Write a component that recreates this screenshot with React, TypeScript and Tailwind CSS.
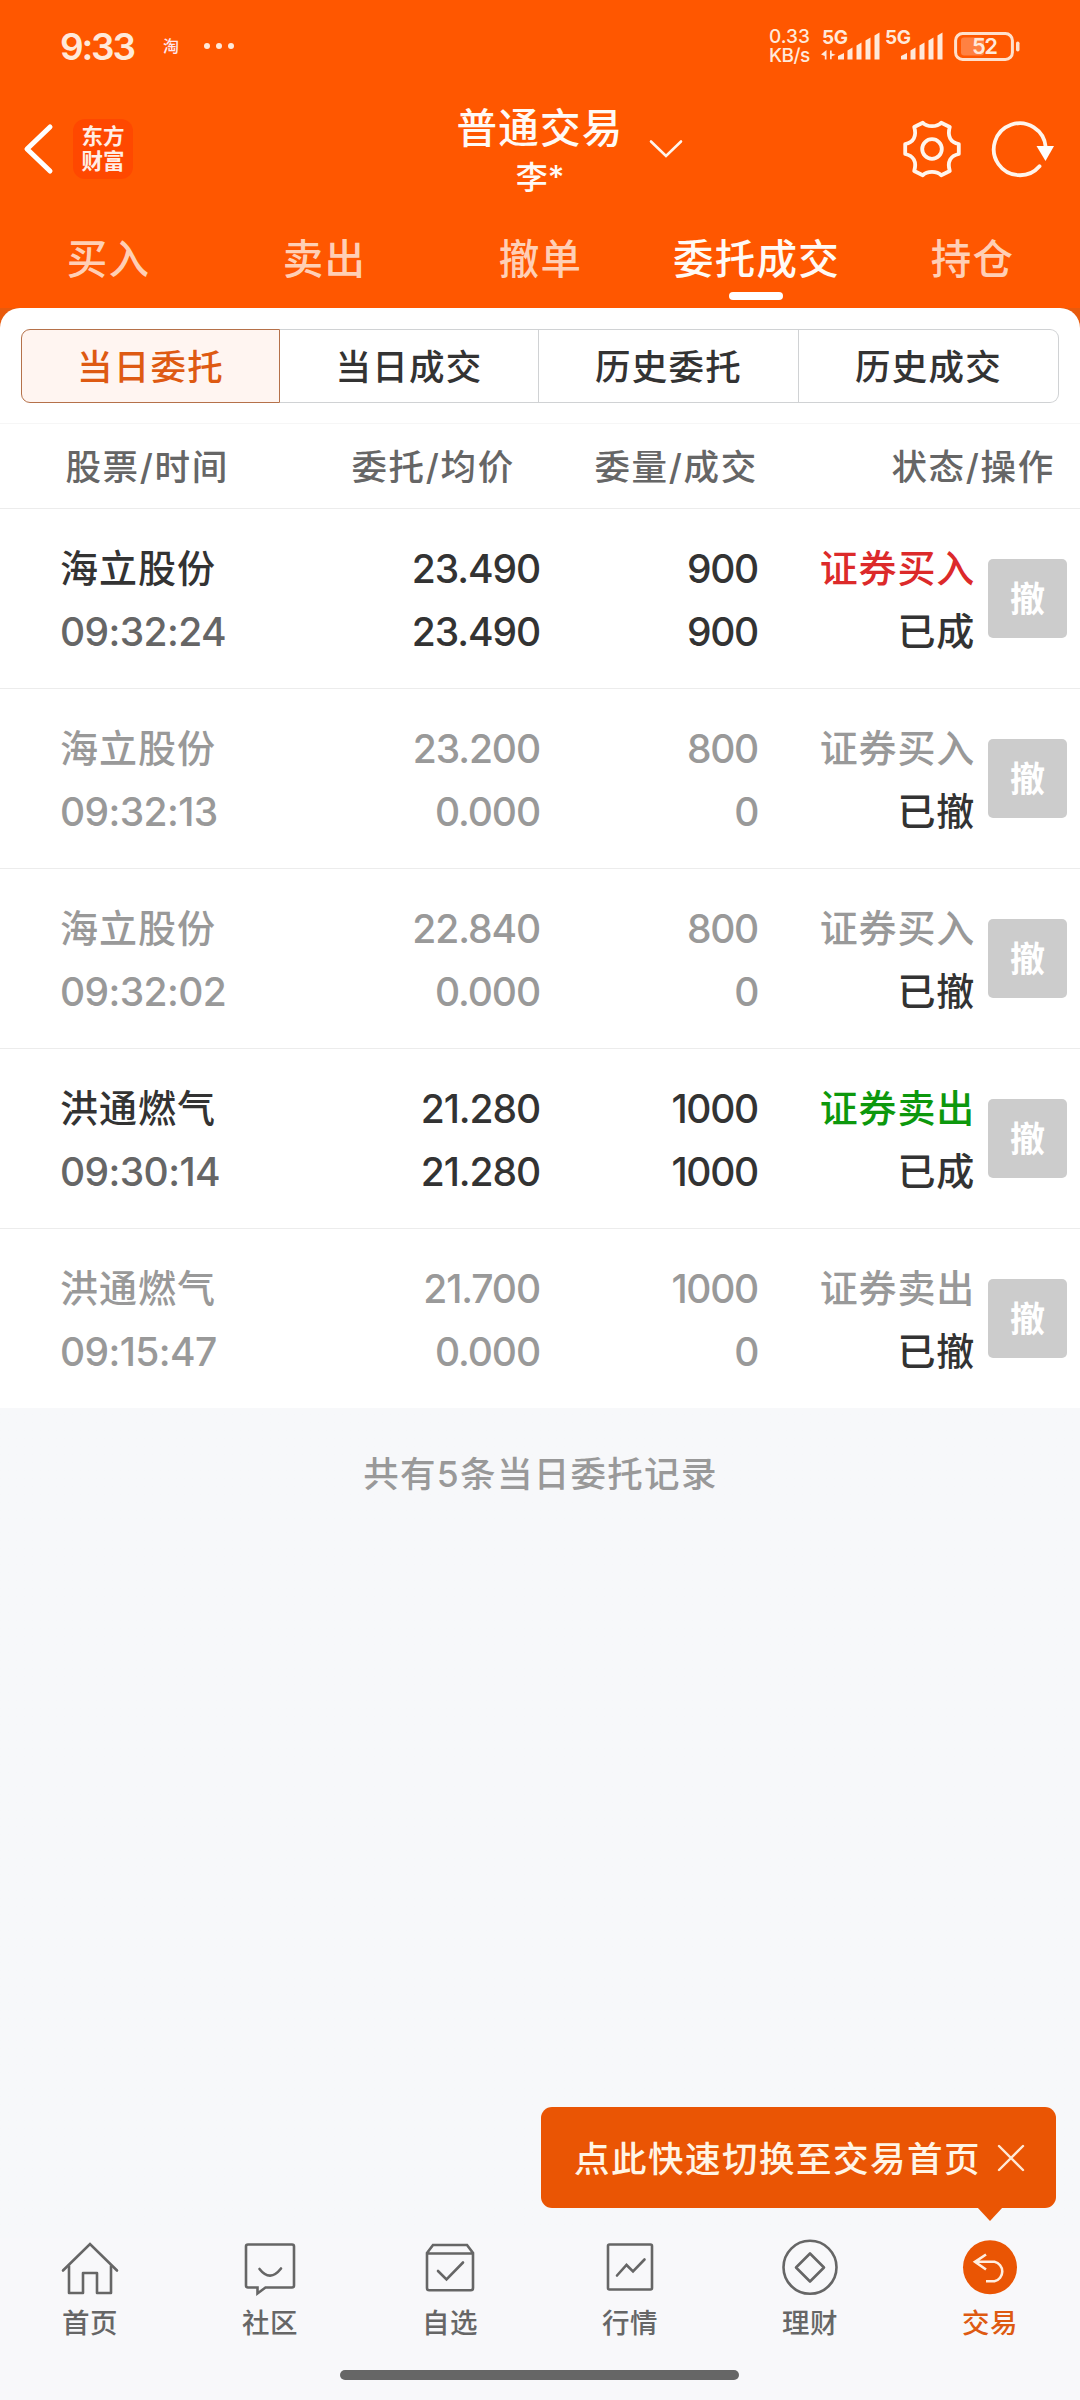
import { clsx } from 'clsx'
import type { ReactNode } from 'react'

const mainTabs = ['买入', '卖出', '撤单', '委托成交', '持仓']
const subTabs = ['当日委托', '当日成交', '历史委托', '历史成交']

type Order = {
  name: string
  time: string
  price: string
  avg: string
  qty: string
  filled: string
  side: 'buy' | 'sell'
  done: boolean
}

const orders: Order[] = [
  { name: '海立股份', time: '09:32:24', price: '23.490', avg: '23.490', qty: '900', filled: '900', side: 'buy', done: true },
  { name: '海立股份', time: '09:32:13', price: '23.200', avg: '0.000', qty: '800', filled: '0', side: 'buy', done: false },
  { name: '海立股份', time: '09:32:02', price: '22.840', avg: '0.000', qty: '800', filled: '0', side: 'buy', done: false },
  { name: '洪通燃气', time: '09:30:14', price: '21.280', avg: '21.280', qty: '1000', filled: '1000', side: 'sell', done: true },
  { name: '洪通燃气', time: '09:15:47', price: '21.700', avg: '0.000', qty: '1000', filled: '0', side: 'sell', done: false },
]

function SignalBars({ x }: { x: number }) {
  return (
    <g fill="#ffe9da">
      <path d={`M${x} 29.5v-3.5l6-3v6.5z`} />
      <path d={`M${x + 9.5} 29.5v-9l5-3v12z`} />
      <path d={`M${x + 18.5} 29.5v-14l5-3v17z`} />
      <path d={`M${x + 27.5} 29.5v-19l5-3v22z`} />
      <path d={`M${x + 36.5} 29.5v-24l5-3v27z`} />
    </g>
  )
}

function StatusBar() {
  return (
    <div className="flex h-[92px] items-center pl-[60px] text-[#ffe9da]">
      <span className="w-[101px] text-[37px] leading-none font-semibold tracking-[-2.200px]">9:33</span>
      <span className="w-[43px] pl-[2px] text-[16px] leading-none font-medium text-[#ffe6f0]">淘</span>
      <span className="flex gap-[6px]">
        <i className="size-[6px] rounded-full bg-[#ffe9da]" />
        <i className="size-[6px] rounded-full bg-[#ffe9da]" />
        <i className="size-[6px] rounded-full bg-[#ffe9da]" />
      </span>
      <div className="ml-auto w-[52px] text-[19px] leading-[19px] font-medium">
        <div>0.33</div>
        <div className="tracking-[-0.500px]">KB/s</div>
      </div>
      <div className="relative h-[32px] w-[133px]">
        <svg className="block" width="133" height="32" viewBox="0 0 133 32">
          <SignalBars x={17} />
          <SignalBars x={80} />
          <path d="M5.5 20v9.500h-1.700v-3.500l-3.800-1.500z M9 20.500h1.700v3l4 1.300-4 1.500v3h-1.700z" fill="#ffe9da" />
        </svg>
        <span className="absolute top-0 left-px text-[19px] leading-[15px] font-bold tracking-[-0.500px]">5G</span>
        <span className="absolute top-0 left-[64px] text-[19px] leading-[15px] font-bold tracking-[-0.500px]">5G</span>
      </div>
      <div className="relative mr-[60px] flex h-[29px] w-[66px]">
        <svg className="block" width="66" height="29" viewBox="0 0 66 29">
          <rect x="1.600" y="1.600" width="56.800" height="25.800" rx="7" fill="none" stroke="#ffe0cc" strokeWidth="3" />
          <rect x="7" y="5.500" width="23" height="18" rx="3" fill="#ff8142" />
          <rect x="62" y="9.500" width="3.500" height="10" rx="1.700" fill="#ffe0cc" />
        </svg>
        <span className="absolute top-0 left-[18px] text-[22px] leading-[29px] font-semibold tracking-[-1.500px]">52</span>
      </div>
    </div>
  )
}

function TitleBar() {
  return (
    <div className="flex h-[114px] items-center">
      <div className="flex w-[360px] items-center pl-[22px]">
        <svg width="32" height="54" viewBox="0 0 32 54" fill="none" stroke="#fff" strokeWidth="5">
          <path d="M28 5 5 27l23 22" strokeLinecap="round" strokeLinejoin="round" />
        </svg>
        <div className="ml-[19px] flex h-[60px] w-[60px] flex-col items-center justify-center rounded-[12px] bg-[#ff4800] text-[21.500px] leading-[25px] font-bold text-[#ffeee6]">
          <div>东方</div>
          <div>财富</div>
        </div>
      </div>
      <div className="flex w-[360px] items-center justify-center pt-[7px] text-[#fffaf5]">
        <div className="text-center font-medium">
          <div className="h-[50px] text-[40.500px] leading-[51px] tracking-[1.300px]">普通交易</div>
          <div className="h-[50px] text-[32px] leading-[50px]">李*</div>
        </div>
      </div>
      <svg className="-ml-[72px]" width="36" height="20" viewBox="0 0 36 20" fill="none" stroke="#fff5ec" strokeWidth="2.600">
        <path d="M3 2.500 18 17 33 2.500" strokeLinecap="round" />
      </svg>
      <svg className="ml-auto" width="60" height="60" viewBox="-30 -30 60 60" fill="none" stroke="#fff5ec" strokeWidth="3.800">
        <circle r="9.800" />
        <path
          d="M-9.200 -26.300 C-5 -21.700 5 -21.700 9.200 -26.300 L17.800 -22 C15 -13 18.500 -6.500 26.800 -5 V5 C18.500 6.500 15 13 17.800 22 L9.200 26.300 C5 21.700 -5 21.700 -9.200 26.300 L-17.800 22 C-15 13 -18.500 6.500 -26.800 5 V-5 C-18.500 -6.500 -15 -13 -17.800 -22 Z"
          strokeLinejoin="round"
        />
      </svg>
      <svg className="mr-[24px] ml-[28px]" width="66" height="60" viewBox="-30 -30 66 60">
        <path d="M25.700 -2 A26 26 0 1 0 19.500 17.200" fill="none" stroke="#fff5ec" strokeWidth="3.800" strokeLinecap="round" />
        <path d="M16.500 -3h17.500l-8.500 15z" fill="#fff" />
      </svg>
    </div>
  )
}

function MainTabs() {
  return (
    <div className="grid h-[102px] grid-cols-5">
      {mainTabs.map((tab) => {
        const active = tab === '委托成交'
        return (
          <div key={tab} className="flex flex-col items-center pt-[24px]">
            <span
              className={clsx(
                'pl-px text-[40.500px] leading-[60px] font-medium tracking-[1.200px] whitespace-nowrap',
                active ? 'text-[#fffaf5]' : 'text-[#ffcfb5]'
              )}
            >
              {tab}
            </span>
            {active && <span className="mt-[2px] h-[8px] w-[54px] rounded-full bg-white" />}
          </div>
        )
      })}
    </div>
  )
}

function SubTabs() {
  return (
    <div className="mx-[21px] mt-[21px] grid h-[74px] grid-cols-[259px_259px_260px_260px] text-[35.500px] text-[#333]">
      {subTabs.map((tab, i) => (
        <div
          key={tab}
          className={clsx(
            'flex items-center justify-center border pt-[3px] tracking-[1.200px]',
            i === 0 && 'rounded-l-[9px] border-[#b5714a] bg-[#fff5f1] text-[#de5a12]',
            i > 0 && 'border-l-0 border-[#d0d2d4]',
            i === 3 && 'rounded-r-[9px]'
          )}
        >
          {tab}
        </div>
      ))}
    </div>
  )
}

function OrderRow({ order }: { order: Order }) {
  const { done, side } = order
  return (
    <div
      className={clsx(
        'flex h-[180px] items-center border-t border-[#ececec] pl-[60px] text-[39px] leading-[63px]',
        done ? 'text-[#333]' : 'text-[#999]'
      )}
    >
      <div className="w-[240px] pt-[3px]">
        <div className="text-[38px] tracking-[1px]">{order.name}</div>
        <div className={clsx('font-[450] tracking-[-0.600px]', done && 'text-[#666]')}>{order.time}</div>
      </div>
      <div className="w-[240px] pt-[2px] text-right font-[450] tracking-[-1.100px]">
        <div>{order.price}</div>
        <div>{order.avg}</div>
      </div>
      <div className="w-[218px] pt-[2px] text-right font-[450] tracking-[-1.300px]">
        <div>{order.qty}</div>
        <div>{order.filled}</div>
      </div>
      <div className="w-[217px] pt-[3px] text-right text-[38px] tracking-[0.800px]">
        <div className={clsx(done && (side === 'buy' ? 'text-[#dc2a2a]' : 'text-[#0d980d]'))}>
          {side === 'buy' ? '证券买入' : '证券卖出'}
        </div>
        <div className="text-[#333]">{done ? '已成' : '已撤'}</div>
      </div>
      <button className="ml-[13px] h-[79px] w-[79px] rounded-[5px] bg-[#ccc] pt-px text-[35px] leading-[79px] font-bold text-white">
        撤
      </button>
    </div>
  )
}

function HomeIcon() {
  return (
    <>
      <path d="M-27 0.500 0 -26 27 0.500" strokeLinecap="round" />
      <path d="M-21 -4.500V23H-7V3H7V23H21V-4.500" strokeLinejoin="round" />
    </>
  )
}

function CommunityIcon() {
  return (
    <>
      <path d="M-22 -25.500H22Q24 -25.500 24 -23.500V15.500Q24 17.500 22 17.500H-4.500L-12.500 23.500V17.500H-22Q-24 17.500 -24 15.500V-23.500Q-24 -25.500 -22 -25.500Z" />
      <path d="M-10.500 -1Q0 12.500 11 -1.500" strokeLinecap="round" />
    </>
  )
}

function WatchlistIcon() {
  return (
    <>
      <path d="M-23 -17-17 -25H17L23 -17V18Q23 20.300 20.800 20.300H-20.800Q-23 20.300 -23 18ZM-23 -16.500H23" />
      <path d="M-12 1-3.500 9.500 13 -7.500" strokeLinecap="round" />
    </>
  )
}

function MarketIcon() {
  return (
    <>
      <rect x="-22" y="-25.500" width="44" height="45" rx="1.500" />
      <path d="M-13 5.500-3.500 -5 3 1.500 14.500 -10.500" strokeLinecap="round" />
    </>
  )
}

function WealthIcon() {
  return (
    <>
      <circle cy="-2.700" r="26.500" />
      <path d="M0 -16.500 14 -2.500 0 11.500 -14 -2.500Z" strokeLinejoin="round" />
    </>
  )
}

function TradeIcon() {
  return (
    <>
      <circle cy="-2.700" r="27" fill="#ea5504" stroke="none" />
      <path d="M-4 -15.500-15 -8.200-4 -0.500M-15 -8.200H4.500A10 10 0 0 1 4.500 11.300H-4" stroke="#ffeee0" />
    </>
  )
}

const navItems: { label: string; icon: ReactNode }[] = [
  { label: '首页', icon: <HomeIcon /> },
  { label: '社区', icon: <CommunityIcon /> },
  { label: '自选', icon: <WatchlistIcon /> },
  { label: '行情', icon: <MarketIcon /> },
  { label: '理财', icon: <WealthIcon /> },
  { label: '交易', icon: <TradeIcon /> },
]

function BottomNav() {
  return (
    <nav className="relative flex h-[162px] flex-col items-center bg-[#f8f8fa]">
      {/* Quick switch tip */}
      <div className="absolute right-[24px] bottom-[192px] flex h-[101px] w-[515px] items-center rounded-[11px] bg-[#ea5504] pt-[4px] pl-[33px] text-[#fff5e6]">
        <span className="text-[35.500px] leading-none font-medium tracking-[1.500px] whitespace-nowrap">点此快速切换至交易首页</span>
        <svg className="mb-[4px] ml-[15px] shrink-0" width="30" height="30" viewBox="0 0 30 30" stroke="#ffe9d6" strokeWidth="2.400">
          <path d="M3 3 27 27M27 3 3 27" strokeLinecap="round" />
        </svg>
        <svg className="absolute top-[100px] right-[53px]" width="26" height="14" viewBox="0 0 26 14">
          <path d="M0 0H26L13 14Z" fill="#ea5504" />
        </svg>
      </div>

      <div className="grid w-full grid-cols-6">
        {navItems.map(({ label, icon }) => (
          <div key={label} className="flex flex-col items-center">
            <svg width="60" height="64" viewBox="-30 -32 60 64" fill="none" stroke="#666" strokeWidth="2.600">
              {icon}
            </svg>
            <span
              className={clsx(
                'mt-[3px] text-[27.500px] leading-[36px] font-medium tracking-[0.600px]',
                label === '交易' ? 'text-[#de5a12]' : 'text-[#666]'
              )}
            >
              {label}
            </span>
          </div>
        ))}
      </div>
      <div className="mt-[29px] mr-px h-[10px] w-[399px] rounded-full bg-[#666]" />
    </nav>
  )
}

export default function App() {
  return (
    <div className="flex h-[2400px] w-[1080px] flex-col overflow-hidden bg-[#f7f8fa] font-['Inter','Noto_Sans_CJK_SC',sans-serif]">
      <header className="shrink-0 bg-[#ff5700]">
        <StatusBar />
        <TitleBar />
        <MainTabs />
      </header>

      <main className="flex-1 bg-linear-to-b from-[#e85a0c] from-[24px] to-[#f7f8fa] to-[24px] font-medium">
        <section className="flow-root rounded-t-[20px] bg-white">
          <SubTabs />
          <div className="mt-[20px] flex h-[85px] items-center border-t border-[#f6f6f6] pt-[3px] text-[35.500px] tracking-[1.700px] text-[#666]">
            <span className="w-[229px] text-right">股票/时间</span>
            <span className="w-[286px] text-right">委托/均价</span>
            <span className="w-[243px] text-right">委量/成交</span>
            <span className="w-[297px] text-right">状态/操作</span>
          </div>
          {orders.map((order) => (
            <OrderRow key={order.time} order={order} />
          ))}
        </section>
        <p className="pt-[37px] pl-px text-center text-[35.500px] leading-[60px] tracking-[1.300px] text-[#999]">共有5条当日委托记录</p>
      </main>

      <BottomNav />
    </div>
  )
}
